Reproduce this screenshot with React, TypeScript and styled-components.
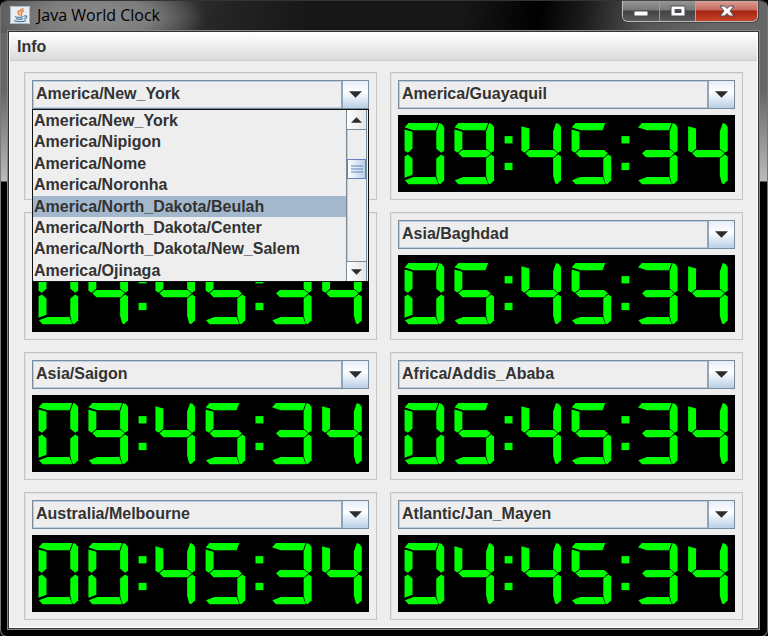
import React, { useState } from "react";
import styled, { createGlobalStyle } from "styled-components";

const GlobalStyle = createGlobalStyle`
  *, *::before, *::after { box-sizing: border-box; }
  html, body, #root { height: 100%; }
  body { margin: 0; background: #000; }
  button, select { font: inherit; color: inherit; }
`;

const Window = styled.div`
  min-height: 100%;
  display: flex;
  flex-direction: column;
  padding: 0 9px 8px 8px;
  border: 1px solid #777;
  border-top-color: #333;
  border-radius: 8px 8px 7px 7px;
  background:
    radial-gradient(ellipse 110px 40px at 95px 16px, #8c8c8c 0, #7c7c7c 50%, transparent 100%) no-repeat,
    linear-gradient(100deg, #555 0, #4c4c4c 14%, #262626 28%, #171717 40%, #171717 60%, #000 70%, #1c1c1c 76%, #555 84%, #666 92%) 0 0 / 100% 32px no-repeat,
    linear-gradient(#666 0, #666 90px, #bbb 180px, #000 181px);
  color: #333;
  font: bold 16px/20px "Liberation Sans", Arial, sans-serif;
`;

const TitleBar = styled.header`
  height: 31px;
  display: flex;
  align-items: flex-start;
  justify-content: space-between;
`;

const TitleGroup = styled.div`
  display: flex;
  align-items: center;
  gap: 7px;
  padding: 4px 0 0 1px;
`;

const Title = styled.h1`
  margin: 0;
  color: #000;
  font: 16px/20px "Open Sans", "Noto Sans", sans-serif;
`;

const WindowButtons = styled.div`
  display: flex;
  border: 1px solid #bbb;
  border-top: 0;
  border-radius: 0 0 6px 6px;
  overflow: hidden;
  box-shadow: 0 0 0 1px #444;
`;

const WindowButton = styled.button<{ $close?: boolean }>`
  width: ${(p) => (p.$close ? 62 : 36)}px;
  height: 20px;
  padding: 0;
  display: grid;
  place-items: center;
  border: 0;
  border-left: 1px solid ${(p) => (p.$close ? "#d69a8c" : "#999")};
  background: ${(p) =>
    p.$close
      ? "linear-gradient(#d9a296, #c4695a 45%, #a32410 50%, #c8432a)"
      : "linear-gradient(#969696, #777 45%, #424242 50%, #5c5c5c)"};
  &:first-child { border-left: 0; }
`;

const Client = styled.main`
  flex: 1;
  display: flex;
  flex-direction: column;
  border: 1px solid #fff;
  outline: 1px solid #333;
  box-shadow: 0 0 0 2px #888;
  background: #eee;
`;

const MenuBar = styled.nav`
  height: 28px;
  display: flex;
  align-items: center;
  border-bottom: 1px solid #ccc;
  background: linear-gradient(#fff, #dadada);
`;

const MenuButton = styled.button`
  padding: 0 7px;
  border: 0;
  background: none;
`;

const ClockGrid = styled.div`
  display: grid;
  grid-template-columns: 1fr 1fr;
  gap: 12px 13px;
  padding: 11px 14px 7px;
`;

const ClockPanel = styled.section`
  position: relative;
  display: flex;
  flex-direction: column;
  gap: 6px;
  padding: 7px;
  height: 128px;
  border: 1px solid #c4c4c4;
  box-shadow: inset 1px 1px #e2e2e2;
`;

const ComboBox = styled.div`
  display: grid;
  grid-template-columns: 1fr 27px;
  height: 29px;
  border: 1px solid #7a8a99;
  box-shadow: inset 1px 1px #b8cfe5, inset -1px -1px #b8cfe5;
`;

const ZoneSelect = styled.select`
  grid-area: 1 / 1 / 2 / 3;
  appearance: none;
  width: 100%;
  padding: 0 30px 0 3px;
  border: 0;
  border-radius: 0;
  background: none;
  outline: none;
`;

const ArrowBox = styled.span`
  grid-area: 1 / 2 / 2 / 3;
  display: grid;
  place-items: center;
  pointer-events: none;
  border-left: 2px solid #8fa5bd;
  background: linear-gradient(#e4edf6, #fff 40%, #b8cfe5);
`;

const Face = styled.svg`
  display: block;
  width: 100%;
  height: 78px;
  background: #000;
  fill: #0f0;
`;

const Popup = styled.div`
  position: absolute;
  z-index: 2;
  top: 36px;
  left: 7px;
  right: 7px;
  height: 173px;
  display: grid;
  grid-template-columns: 1fr 22px;
  border: 1px solid #111;
  background: #eee;
`;

const Options = styled.ul`
  display: grid;
  grid-template-rows: repeat(8, 1fr);
  margin: 0;
  padding: 0;
  list-style: none;
`;

const Option = styled.li`
  padding: 1px 1px 0;
  cursor: default;
  &[aria-selected="true"] { background: #a3b8cc; }
`;

const ScrollBar = styled.div`
  display: flex;
  flex-direction: column;
  margin-right: 1px;
  border: 1px solid #7a8a99;
  border-top: 0;
  border-bottom: 0;
  box-shadow: inset 1px 0 #b8cfe5;
`;

const ScrollButton = styled.button`
  height: 19px;
  padding: 0;
  display: grid;
  place-items: center;
  border: 0;
  background: linear-gradient(90deg, #fff, #e4e4e4);
`;

const Track = styled.div`
  flex: 1;
  padding-top: 29px;
  border: 1px solid #7a8a99;
  border-left: 0;
  border-right: 0;
`;

const Thumb = styled.div`
  height: 20px;
  display: grid;
  place-items: center;
  border: 1px solid #6382bf;
  background: linear-gradient(90deg, #fff, #dce8f5 50%, #b8cfe5);
`;

const SEGMENTS: Record<string, string> = {
  a: "1,12 12,0 102,0 94,22 27,22 1,14",
  b: "105,0 113,3 120,12 120,84 111,90 96,78 96,26",
  c: "111,96 120,102 120,174 108,186 102,183 96,160 96,108",
  d: "1,174 27,164 94,164 102,186 12,186",
  e: "10,96 24,108 24,157 0,166 0,102",
  f: "0,20 24,27 24,78 10,90 0,84",
  g: "12,92 24,82 98,82 110,92 98,104 24,104",
  h: "0,10 24,17 24,78 10,90 0,84",
};

const DIGITS: Record<string, string> = {
  "0": "abcdef",
  "3": "abcdg",
  "4": "bcgh",
  "5": "acdfg",
  "9": "abcdfg",
};

const CELL_STARTS = [15, 166, 318, 369, 521, 672, 722, 874];

function SegmentClock({ time }: { time: string }) {
  return (
    <Face viewBox="0 0 1011 234" role="img" aria-label={time}>
      {time.split("").map((char, i) => (
        <g key={i} transform={`translate(${CELL_STARTS[i]} 24)`}>
          {char === ":" ? (
            <>
              <rect y="40" width="24" height="22" />
              <rect y="121" width="24" height="22" />
            </>
          ) : (
            DIGITS[char].split("").map((s) => <polygon key={s} points={SEGMENTS[s]} />)
          )}
        </g>
      ))}
    </Face>
  );
}

function Triangle({ up, small }: { up?: boolean; small?: boolean }) {
  return (
    <svg width={small ? 11 : 13} height={small ? 6 : 7} viewBox="0 0 12 6" aria-hidden="true">
      <path d={up ? "M0 6 6 0l6 6z" : "M0 0h12L6 6z"} fill="#2b2b2b" />
    </svg>
  );
}

const OPTIONS = [
  "America/New_York",
  "America/Nipigon",
  "America/Nome",
  "America/Noronha",
  "America/North_Dakota/Beulah",
  "America/North_Dakota/Center",
  "America/North_Dakota/New_Salem",
  "America/Ojinaga",
];

const CLOCKS = [
  { zone: "America/New_York", time: "04:45:34", open: true },
  { zone: "America/Guayaquil", time: "09:45:34" },
  { zone: "America/Ojinaga", time: "04:45:34" },
  { zone: "Asia/Baghdad", time: "05:45:34" },
  { zone: "Asia/Saigon", time: "09:45:34" },
  { zone: "Africa/Addis_Ababa", time: "05:45:34" },
  { zone: "Australia/Melbourne", time: "00:45:34" },
  { zone: "Atlantic/Jan_Mayen", time: "04:45:34" },
];

function ZonePopup() {
  const [active, setActive] = useState(OPTIONS[4]);
  return (
    <Popup>
      <Options role="listbox" aria-label="Time zones">
        {OPTIONS.map((name) => (
          <Option
            key={name}
            role="option"
            aria-selected={name === active}
            onMouseEnter={() => setActive(name)}
          >
            {name}
          </Option>
        ))}
      </Options>
      <ScrollBar>
        <ScrollButton aria-label="Scroll up"><Triangle up small /></ScrollButton>
        <Track>
          <Thumb>
            <svg width="12" height="8" viewBox="0 0 12 8" aria-hidden="true">
              <path d="M0 1h12M0 4h12M0 7h12" stroke="#6382bf" />
            </svg>
          </Thumb>
        </Track>
        <ScrollButton aria-label="Scroll down"><Triangle small /></ScrollButton>
      </ScrollBar>
    </Popup>
  );
}

function Clock({ zone, time, open }: { zone: string; time: string; open?: boolean }) {
  const [value, setValue] = useState(zone);
  const names = Array.from(new Set([zone, ...OPTIONS]));
  return (
    <ClockPanel>
      <ComboBox>
        <ZoneSelect aria-label="Time zone" value={value} onChange={(e) => setValue(e.target.value)}>
          {names.map((name) => <option key={name}>{name}</option>)}
        </ZoneSelect>
        <ArrowBox><Triangle /></ArrowBox>
      </ComboBox>
      <SegmentClock time={time} />
      {open && <ZonePopup />}
    </ClockPanel>
  );
}

function JavaIcon() {
  return (
    <svg width="20" height="18" viewBox="0 0 20 18" aria-hidden="true">
      <rect width="20" height="18" rx="1" fill="#e9edf0" />
      <rect x=".5" y=".5" width="19" height="17" rx="1" fill="none" stroke="#a9b9c6" />
      <path d="M13.500 2.500C12 4 8 4.500 8 6.500c0 1 1.500 1.500 1.500 3M14 5c-2.500.5-3.500 1.500-2.500 3 .4 .6 0 1.500-.7 2" fill="none" stroke="#e8863a" strokeWidth="1.600" />
      <path d="M5 10.500c2 1 6 1 8.500 0M6 12.500c2 1 5 1 7 0M4 14.500c3 1.500 9 1.500 12 0M14 10c3.500-1 3.500 2 0 3" fill="none" stroke="#527da1" strokeWidth="1.300" />
    </svg>
  );
}

export default function App() {
  return (
    <>
      <GlobalStyle />
      <Window>
        <TitleBar>
          <TitleGroup>
            <JavaIcon />
            <Title>Java World Clock</Title>
          </TitleGroup>
          <WindowButtons>
            <WindowButton aria-label="Minimize">
              <svg width="16" height="14" viewBox="0 0 16 14">
                <rect x="1" y="7" width="14" height="5" rx="1" fill="#fff" stroke="#4b4b5a" />
              </svg>
            </WindowButton>
            <WindowButton aria-label="Maximize">
              <svg width="16" height="12" viewBox="0 0 16 12">
                <path d="M1 1h14v10H1zM5 4.500h6v3H5z" fill="#fff" fillRule="evenodd" stroke="#4b4b5a" />
              </svg>
            </WindowButton>
            <WindowButton $close aria-label="Close">
              <svg width="16" height="12" viewBox="0 0 16 12">
                <path d="M1 1h4.500L8 3.500 10.500 1H15l-4 5 4 5h-4.500L8 8.500 5.500 11H1l4-5z" fill="#fff" stroke="#4b4b5a" />
              </svg>
            </WindowButton>
          </WindowButtons>
        </TitleBar>
        <Client>
          <MenuBar><MenuButton>Info</MenuButton></MenuBar>
          <ClockGrid>
            {CLOCKS.map((clock, i) => <Clock key={i} {...clock} />)}
          </ClockGrid>
        </Client>
      </Window>
    </>
  );
}
